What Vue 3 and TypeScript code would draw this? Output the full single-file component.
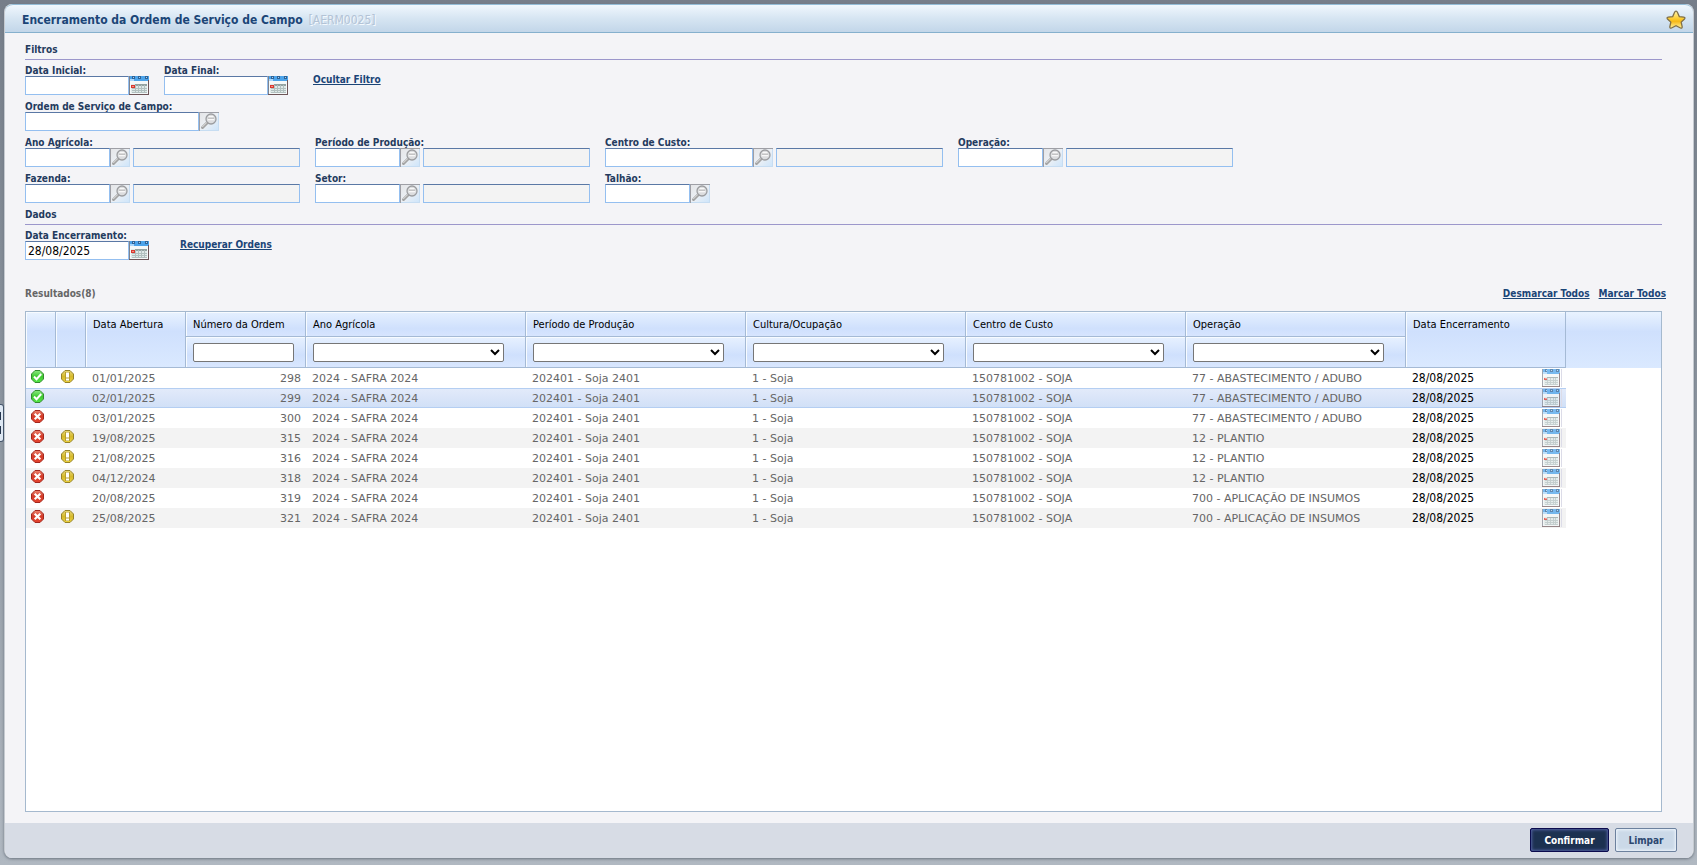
<script setup lang="ts">
import { ref } from 'vue'

interface Order {
  ok: boolean
  warn: boolean
  opened: string
  number: number
  operation: string
  closed: string
}

interface Lookup {
  id: string
  label: string
  size: 'short' | 'medium' | 'long'
  description: boolean
}

const filterRows: Lookup[][] = [
  [{ id: 'ordem', label: 'Ordem de Serviço de Campo:', size: 'long', description: false }],
  [
    { id: 'ano', label: 'Ano Agrícola:', size: 'short', description: true },
    { id: 'periodo', label: 'Período de Produção:', size: 'short', description: true },
    { id: 'centro', label: 'Centro de Custo:', size: 'medium', description: true },
    { id: 'operacao', label: 'Operação:', size: 'short', description: true },
  ],
  [
    { id: 'fazenda', label: 'Fazenda:', size: 'short', description: true },
    { id: 'setor', label: 'Setor:', size: 'short', description: true },
    { id: 'talhao', label: 'Talhão:', size: 'short', description: false },
  ],
]

const selectColumns = ['Ano Agrícola', 'Período de Produção', 'Cultura/Ocupação', 'Centro de Custo', 'Operação']

const abastecimento = '77 - ABASTECIMENTO / ADUBO'
const plantio = '12 - PLANTIO'
const insumos = '700 - APLICAÇÃO DE INSUMOS'
const date = '28/08/2025'

const orders = ref<Order[]>([
  { ok: true, warn: true, opened: '01/01/2025', number: 298, operation: abastecimento, closed: date },
  { ok: true, warn: false, opened: '02/01/2025', number: 299, operation: abastecimento, closed: date },
  { ok: false, warn: false, opened: '03/01/2025', number: 300, operation: abastecimento, closed: date },
  { ok: false, warn: true, opened: '19/08/2025', number: 315, operation: plantio, closed: date },
  { ok: false, warn: true, opened: '21/08/2025', number: 316, operation: plantio, closed: date },
  { ok: false, warn: true, opened: '04/12/2024', number: 318, operation: plantio, closed: date },
  { ok: false, warn: false, opened: '20/08/2025', number: 319, operation: insumos, closed: date },
  { ok: false, warn: true, opened: '25/08/2025', number: 321, operation: insumos, closed: date },
])

const selected = ref(299)
const closingDate = ref(date)
const showFilters = ref(true)

function markAll(value: boolean) {
  orders.value.forEach((order) => (order.ok = value))
}
</script>

<template>
  <div class="page">
    <svg class="symbols" width="0" height="0" aria-hidden="true">
      <linearGradient id="g-star" x1="0" y1="0" x2="0" y2="1">
        <stop offset="0" stop-color="#fff7b0" />
        <stop offset=".45" stop-color="#fbcb2e" />
        <stop offset=".6" stop-color="#f6b918" />
        <stop offset="1" stop-color="#fff4a0" />
      </linearGradient>
      <linearGradient id="g-green" x1="0" y1="0" x2="0" y2="1">
        <stop offset="0" stop-color="#8bea80" />
        <stop offset=".5" stop-color="#3fc832" />
        <stop offset="1" stop-color="#55e847" />
      </linearGradient>
      <linearGradient id="g-red" x1="0" y1="0" x2="0" y2="1">
        <stop offset="0" stop-color="#f08a75" />
        <stop offset=".45" stop-color="#d23b28" />
        <stop offset="1" stop-color="#e5442f" />
      </linearGradient>
      <linearGradient id="g-yellow" x1="0" y1="0" x2="0" y2="1">
        <stop offset="0" stop-color="#e9d878" />
        <stop offset=".5" stop-color="#d5b92c" />
        <stop offset="1" stop-color="#ecd23c" />
      </linearGradient>
      <linearGradient id="g-lookup" x1="0" y1="0" x2="1" y2="1">
        <stop offset="0" stop-color="#e4e4e6" />
        <stop offset=".5" stop-color="#ecf0f5" />
        <stop offset="1" stop-color="#cbe4fb" />
      </linearGradient>
      <symbol id="i-calendar" viewBox="0 0 20 19" preserveAspectRatio="none">
        <g shape-rendering="crispEdges">
          <rect width="20" height="19" fill="#f4f8f8" />
          <rect width="20" height="5" fill="#4ba3ea" />
          <rect x="1" y="3" width="4" height="2" fill="#a9d6fb" />
          <path d="M3 0h3v3H3zM9 0h3v3H9zM16 0h3v3h-3z" fill="#2f6396" />
          <path d="M4 1h1v1H4zM10 1h1v1h-1zM17 1h1v1h-1z" fill="#a9d3f6" />
          <rect x="2" y="8" width="16" height="9" fill="#dfe9e8" />
          <rect x="6" y="8" width="12" height="2" fill="#93a2a1" />
          <path d="M3 12.500h15M3 14.500h15M3 16.500h15M6.500 9v8M9.500 9v8M12.500 9v8M15.500 9v8" stroke="#b2c0bf" />
          <rect x="2" y="9" width="4" height="3" fill="#d8392f" />
          <path d="M3 10.500h2" stroke="#f58d80" />
          <path d="M.5 0v19" stroke="#7d838f" />
          <path d="M19.500 4v15M0 18.500h20" stroke="#6d5558" />
        </g>
      </symbol>
      <symbol id="i-lookup" viewBox="0 0 20 19">
        <rect width="20" height="19" fill="url(#g-lookup)" />
        <path d="M0 .5h20M.5 0v19" stroke="#9e9fa6" />
        <path d="M19.500 1v18M1 18.500h19" stroke="#c7ddf2" />
        <path d="M3.500 15.500 8.500 10.500" stroke="#a3a3a3" stroke-width="3" stroke-linecap="round" />
        <path d="M3.500 14.800 8 10.300" stroke="#e4e4e4" stroke-linecap="round" />
        <circle cx="12" cy="7" r="5" fill="#dcdddf" stroke="#9c9da0" stroke-width="1.300" />
        <path d="M8.700 7.500h6.600M9.500 4.800h5" stroke="#f8f8f8" stroke-width="1.400" />
        <path d="M9 6.200h6" stroke="#aaa" stroke-width=".8" />
      </symbol>
      <symbol id="i-ok" viewBox="0 0 13 13">
        <path d="M4 .5h5L12.500 4v5L9 12.500H4L.5 9V4Z" fill="url(#g-green)" stroke="#348b30" />
        <path d="m3 6.500 2.500 2.700L10.200 4" fill="none" stroke="#fff" stroke-width="2" />
      </symbol>
      <symbol id="i-error" viewBox="0 0 13 13">
        <path d="M4 .5h5L12.500 4v5L9 12.500H4L.5 9V4Z" fill="url(#g-red)" stroke="#a3281f" />
        <path d="m3.700 3.700 5.600 5.600m0-5.600L3.700 9.300" stroke="#fff" stroke-width="2.200" />
      </symbol>
      <symbol id="i-warn" viewBox="0 0 13 13">
        <path d="M4 .5h5L12.500 4v5L9 12.500H4L.5 9V4Z" fill="url(#g-yellow)" stroke="#96832a" />
        <path d="M4 2h5v6H4zM4 8h5v3H4z" fill="#b79e2c" />
        <path d="M5 2.500h3v5H5zM5 8.500h3v2H5z" fill="#fff" />
      </symbol>
      <symbol id="i-star" viewBox="0 0 20 20">
        <path d="M10 1.200q1 0 1.500 1.200l1.800 4.200 4.500.5q1.900.4.700 1.900l-3.300 3.100 1 4.700q.1 1.900-1.700 1.200L10 15.700 5.500 18q-1.800.7-1.700-1.200l1-4.700L1.500 9Q.3 7.500 2.200 7.100l4.500-.5 1.800-4.200Q9 1.200 10 1.200Z" fill="url(#g-star)" stroke="#807048" stroke-width="1.300" />
      </symbol>
    </svg>

    <button class="drawer" type="button" aria-label="Abrir menu"><i></i><i></i></button>

    <main class="window">
      <header class="titlebar">
        <h1>Encerramento da Ordem de Serviço de Campo</h1>
        <span class="code">[AERM0025]</span>
        <button class="icon-button star" type="button" aria-label="Favorito">
          <svg width="20" height="20"><use href="#i-star" /></svg>
        </button>
      </header>

      <div class="content">
        <h2>Filtros</h2>
        <div class="row">
          <div class="field">
            <label for="inicial">Data Inicial:</label>
            <div class="control">
              <input id="inicial" class="box date" type="text" />
              <button class="icon-button" type="button" aria-label="Escolher data inicial"><svg width="20" height="19"><use href="#i-calendar" /></svg></button>
            </div>
          </div>
          <div class="field">
            <label for="final">Data Final:</label>
            <div class="control">
              <input id="final" class="box date" type="text" />
              <button class="icon-button" type="button" aria-label="Escolher data final"><svg width="20" height="19"><use href="#i-calendar" /></svg></button>
            </div>
          </div>
          <a class="action hide-link" href="#" @click.prevent="showFilters = !showFilters">Ocultar Filtro</a>
        </div>
        <template v-if="showFilters">
          <div v-for="(row, index) in filterRows" :key="index" class="row">
            <div v-for="field in row" :key="field.id" class="field">
              <label :for="field.id">{{ field.label }}</label>
              <div class="control">
                <input :id="field.id" class="box" :class="field.size" type="text" />
                <button class="icon-button" type="button" aria-label="Pesquisar"><svg width="20" height="19"><use href="#i-lookup" /></svg></button>
                <input v-if="field.description" class="box description" type="text" readonly :aria-label="field.label + ' descrição'" />
              </div>
            </div>
          </div>
        </template>

        <h2>Dados</h2>
        <div class="row">
          <div class="field">
            <label for="encerramento">Data Encerramento:</label>
            <div class="control">
              <input id="encerramento" v-model="closingDate" class="box date" type="text" />
              <button class="icon-button" type="button" aria-label="Escolher data de encerramento"><svg width="20" height="19"><use href="#i-calendar" /></svg></button>
            </div>
          </div>
          <a class="action recover-link" href="#" @click.prevent>Recuperar Ordens</a>
        </div>

        <div class="summary">
          <span class="count">Resultados({{ orders.length }})</span>
          <nav>
            <a href="#" @click.prevent="markAll(false)">Desmarcar Todos</a>
            <a href="#" @click.prevent="markAll(true)">Marcar Todos</a>
          </nav>
        </div>

        <div class="grid">
          <table>
            <colgroup>
              <col class="c-icon" /><col class="c-icon" /><col class="c-open" /><col class="c-number" />
              <col v-for="name in selectColumns" :key="name" class="c-select" />
              <col class="c-close" /><col />
            </colgroup>
            <thead>
              <tr class="names">
                <th rowspan="2"></th>
                <th rowspan="2"></th>
                <th rowspan="2" scope="col">Data Abertura</th>
                <th class="split" scope="col">Número da Ordem</th>
                <th v-for="name in selectColumns" :key="name" class="split" scope="col">{{ name }}</th>
                <th rowspan="2" scope="col">Data Encerramento</th>
                <th rowspan="2" class="rest"></th>
              </tr>
              <tr class="searches">
                <th><input class="search" type="text" aria-label="Filtrar Número da Ordem" /></th>
                <th v-for="name in selectColumns" :key="name">
                  <select class="search" :aria-label="'Filtrar ' + name"><option></option></select>
                </th>
              </tr>
            </thead>
            <tbody>
              <tr v-for="order in orders" :key="order.number" :class="{ selected: order.number === selected }" @click="selected = order.number">
                <td class="status">
                  <button class="icon-button" type="button" :aria-label="order.ok ? 'Marcada' : 'Desmarcada'" @click="order.ok = !order.ok">
                    <svg width="13" height="13"><use :href="order.ok ? '#i-ok' : '#i-error'" /></svg>
                  </button>
                </td>
                <td class="status"><svg v-if="order.warn" width="13" height="13" role="img" aria-label="Alerta"><use href="#i-warn" /></svg></td>
                <td>{{ order.opened }}</td>
                <td class="number">{{ order.number }}</td>
                <td>2024 - SAFRA 2024</td>
                <td>202401 - Soja 2401</td>
                <td>1 - Soja</td>
                <td>150781002 - SOJA</td>
                <td>{{ order.operation }}</td>
                <td class="closing">
                  <div>
                    <input v-model="order.closed" type="text" :aria-label="'Data Encerramento ' + order.number" />
                    <button class="icon-button" type="button" aria-label="Escolher data"><svg width="18" height="18"><use href="#i-calendar" /></svg></button>
                  </div>
                </td>
                <td class="rest"></td>
              </tr>
            </tbody>
          </table>
        </div>
      </div>

      <footer>
        <button class="primary" type="button">Confirmar</button>
        <button class="secondary" type="button">Limpar</button>
      </footer>
    </main>
  </div>
</template>

<style>
html, body { margin: 0; }
</style>

<style scoped>
.page, .page * { box-sizing: border-box; }
.page {
  position: relative;
  display: flex;
  min-height: 100vh;
  padding: 4px 3px 7px 4px;
  background: linear-gradient(#767e8a, #88919c 40%, #b0b8c1);
  font-family: "DejaVu Sans Condensed", "DejaVu Sans", sans-serif;
  font-size: 10px;
  color: #243b5e;
}
.symbols { position: absolute; }
.drawer {
  position: absolute;
  left: 0;
  top: 404px;
  display: flex;
  flex-direction: column;
  justify-content: center;
  gap: 6px;
  width: 4px;
  height: 38px;
  padding: 0;
  border: 1px solid #44546a;
  border-left: 0;
  border-radius: 0 3px 3px 0;
  background: #dde7f3;
}
.drawer i { width: 1px; height: 8px; background: #26364e; }
.window {
  display: flex;
  flex: 1;
  flex-direction: column;
  min-width: 0;
  border-left: 1px solid #c5cad0;
  border-right: 1px solid #c5cad0;
  border-radius: 8px;
  background: #f4f4f7;
  box-shadow: 0 1px 3px #6b747f;
  overflow: hidden;
}
.titlebar {
  display: flex;
  align-items: center;
  height: 29px;
  padding: 2px 7px 0 17px;
  border-top: 1px solid #93bcd6;
  border-bottom: 1px solid #85b0cd;
  border-radius: 8px 8px 0 0;
  background: linear-gradient(#f0f7fd, #d6e5f2 50%, #c2d6e9);
}
h1 { margin: 0; font-size: 12px; color: #1b4577; }
.code { margin-left: 6px; font-size: 12px; color: #b3c3d6; text-shadow: 1px 1px #f4f9fd; }
.star { margin-left: auto; }
.icon-button { display: block; flex: none; padding: 0; border: 0; background: none; cursor: pointer; }
.icon-button svg, .status svg { display: block; }
.content { display: flex; flex: 1; flex-direction: column; padding: 10px 31px 11px 20px; }
h2 {
  margin: 0 0 4px;
  height: 17px;
  border-bottom: 1px solid #9c97cb;
  font-size: 10px;
  line-height: 14px;
}
.row { display: flex; gap: 15px; margin-bottom: 5px; }
.field label { display: block; height: 12px; font-weight: bold; line-height: 14px; white-space: nowrap; }
.control { display: flex; }
.box {
  height: 19px;
  padding: 0 2px;
  border: 1px solid #94bff0;
  border-top-color: #5a78a5;
  border-radius: 0;
  background: #fff;
  color: #000;
  font-family: inherit;
  font-size: 12px;
  outline: none;
}
.date { width: 104px; }
.short { width: 85px; }
.medium { width: 148px; }
.long { width: 174px; }
.description { width: 167px; margin-left: 3px; background: #f3f3f3; }
a { color: #1b4577; font-weight: bold; line-height: 14px; white-space: nowrap; }
.action { align-self: center; }
.hide-link { margin-left: 10px; }
.recover-link { margin-left: 16px; }
.summary {
  display: flex;
  justify-content: space-between;
  margin: 22px -4px 10px 0;
  line-height: 14px;
}
.count { font-weight: bold; color: #666; }
.summary nav { display: flex; gap: 9px; }
.grid { flex: 1; border: 1px solid #a5b9ce; background: #fff; overflow: auto; }
table { width: 100%; border-collapse: separate; border-spacing: 0; table-layout: fixed; }
.c-icon { width: 30px; }
.c-open { width: 100px; }
.c-number { width: 120px; }
.c-select { width: 220px; }
.c-close { width: 160px; }
th {
  padding: 2px 7px 0;
  border-right: 1px solid #a5bad5;
  border-bottom: 1px solid #a5bad5;
  background: linear-gradient(#e9f3ff, #cfe0fd 35%, #dae9ff);
  box-shadow: inset 1px 1px #f7fbff;
  color: #000;
  font-size: 11px;
  font-weight: normal;
  line-height: 22px;
  text-align: left;
  vertical-align: top;
  white-space: nowrap;
}
th.split { height: 25px; background: linear-gradient(#e5f0ff, #cfe0fd 70%, #d7e5fe); }
th.rest { border-right: 0; border-bottom: 0; box-shadow: none; }
.searches th { height: 31px; padding: 6px 7px 5px; background: linear-gradient(#e7f1ff, #cfe0fd 60%, #d9e7fe); line-height: 18px; }
.search {
  display: block;
  height: 19px;
  margin: 0;
  padding: 0;
  border: 1px solid #767676;
  border-radius: 2px;
  background-color: #fff;
  color: #000;
  font-size: 11px;
}
input.search { width: 101px; }
select.search { width: 191px; }
td {
  height: 20px;
  padding: 2px 7px 0 6px;
  border-top: 1px solid transparent;
  border-bottom: 1px solid transparent;
  color: #666;
  font-family: Verdana, "DejaVu Sans", sans-serif;
  font-size: 11px;
  line-height: 16px;
  white-space: nowrap;
}
tbody tr:nth-child(even) td { background: #f3f3f3; }
tbody tr.selected td { border-color: #b4cef2; background: linear-gradient(#e2eafa, #d1e0f7); }
tbody tr td.rest, tbody tr.selected td.rest { border-color: transparent; background: #fff; }
td.status { padding: 1px 5px 0; vertical-align: top; }
td.number { padding-right: 5px; text-align: right; }
td.closing { padding: 0 4px 0 6px; }
.closing div { display: flex; height: 18px; border-right: 1px solid #dcdce8; }
.closing input {
  flex: 1;
  min-width: 0;
  padding: 0;
  border: 0;
  background: none;
  color: #000;
  font-family: "DejaVu Sans Condensed", "DejaVu Sans", sans-serif;
  font-size: 12px;
  outline: none;
}
.closing .icon-button { margin-right: 1px; opacity: .75; }
footer {
  display: flex;
  align-items: center;
  justify-content: flex-end;
  gap: 6px;
  height: 35px;
  padding: 0 16px 1px 0;
  background: #d7dce5;
}
footer button { height: 24px; padding: 0; border-radius: 2px; font-family: inherit; font-size: 10px; font-weight: bold; }
.primary { width: 79px; border: 1px solid #0b0b4e; background: #1c3150; box-shadow: inset 0 0 3px 1px #5462a4; color: #fff; }
.secondary { width: 62px; border: 1px solid #6c819e; background: #cbd9e8; box-shadow: inset 0 0 3px 1px #eef5fc; color: #2c4870; }
</style>
